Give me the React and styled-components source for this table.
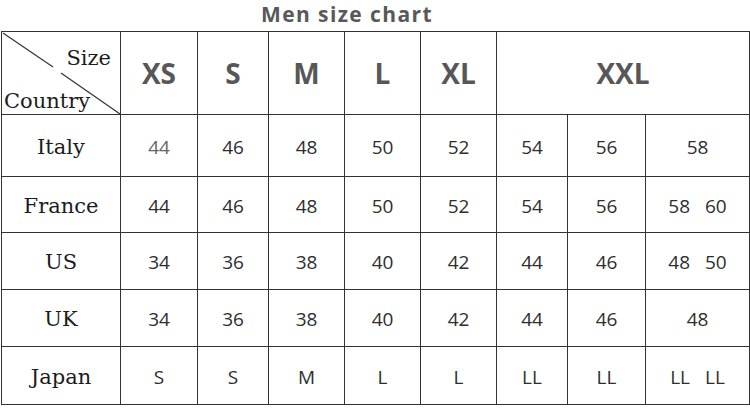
import React from "react";
import styled, { createGlobalStyle } from "styled-components";

const GlobalStyle = createGlobalStyle`
  body {
    margin: 0;
    background: #fff;
  }
`;

const Page = styled.div`
  width: 750px;
  height: 413px;
  overflow: hidden;
  background: #fff;
`;

const Title = styled.div`
  height: 31px;
  box-sizing: border-box;
  padding: 0 56px 2px 0;
  text-align: center;
  font-family: "Open Sans", sans-serif;
  font-weight: 700;
  font-size: 21px;
  line-height: 29px;
  letter-spacing: 1.4px;
  color: #595959;
`;

const Table = styled.div`
  display: grid;
  grid-template-columns: 119px 77px 71px 76px 76px 76px 71px 78px 104px;
  grid-template-rows: 83px 62px 56px 57px 57px 58px;
  margin-left: 1px;
  width: 749px;
  box-sizing: border-box;
  border-top: 1px solid #333;
  border-left: 1px solid #333;
`;

const Cell = styled.div`
  box-sizing: border-box;
  border-right: 1px solid #333;
  border-bottom: 1px solid #333;
  display: flex;
  align-items: center;
  justify-content: center;
  gap: 15px;
  padding-top: 2px;
  grid-column: span ${(p) => p.span || 1};
  font-family: "Open Sans", sans-serif;
  font-size: 19px;
  color: ${(p) => p.color || "#2e2e2e"};
`;

const SizeHead = styled(Cell)`
  padding-top: 0;
  font-weight: 700;
  font-size: 28px;
  color: #575757;
`;

const Country = styled(Cell)`
  font-family: "DejaVu Serif", serif;
  font-size: 21px;
  color: #1c1c1c;
`;

const Corner = styled.div`
  position: relative;
  box-sizing: border-box;
  border-right: 1px solid #333;
  border-bottom: 1px solid #333;
  display: flex;
  flex-direction: column;
  justify-content: space-between;
  padding: 14px 9px 1px 2px;
  font-family: "DejaVu Serif", serif;
  font-size: 21px;
  line-height: 24px;
  color: #1c1c1c;
`;

const CornerLabel = styled.span`
  align-self: ${(p) => (p.right ? "flex-end" : "flex-start")};
`;

const Diagonal = styled.svg`
  position: absolute;
  left: 0;
  top: 0;
  width: 118px;
  height: 82px;
  pointer-events: none;
`;

const sizes = ["XS", "S", "M", "L", "XL"];

const rows = [
  ["Italy", ["44", "46", "48", "50", "52", "54", "56", ["58"]]],
  ["France", ["44", "46", "48", "50", "52", "54", "56", ["58", "60"]]],
  ["US", ["34", "36", "38", "40", "42", "44", "46", ["48", "50"]]],
  ["UK", ["34", "36", "38", "40", "42", "44", "46", ["48"]]],
  ["Japan", ["S", "S", "M", "L", "L", "LL", "LL", ["LL", "LL"]]],
];

export default function App() {
  return (
    <Page>
      <GlobalStyle />
      <Title>Men size chart</Title>
      <Table>
        <Corner>
          <Diagonal viewBox="0 0 118 82">
            <line x1="1" y1="1" x2="51" y2="35" stroke="#333" strokeWidth="1.2" />
            <line x1="59" y1="41" x2="118" y2="82" stroke="#333" strokeWidth="1.2" />
          </Diagonal>
          <CornerLabel right>Size</CornerLabel>
          <CornerLabel>Country</CornerLabel>
        </Corner>
        {sizes.map((s) => (
          <SizeHead key={s}>{s}</SizeHead>
        ))}
        <SizeHead span={3}>XXL</SizeHead>

        {rows.map(([name, values]) => (
          <React.Fragment key={name}>
            <Country>{name}</Country>
            {values.map((v, i) =>
              Array.isArray(v) ? (
                <Cell key={i}>
                  {v.map((x, j) => (
                    <span key={j}>{x}</span>
                  ))}
                </Cell>
              ) : (
                <Cell key={i} color={name === "Italy" && i === 0 ? "#666" : undefined}>
                  {v}
                </Cell>
              )
            )}
          </React.Fragment>
        ))}
      </Table>
    </Page>
  );
}
